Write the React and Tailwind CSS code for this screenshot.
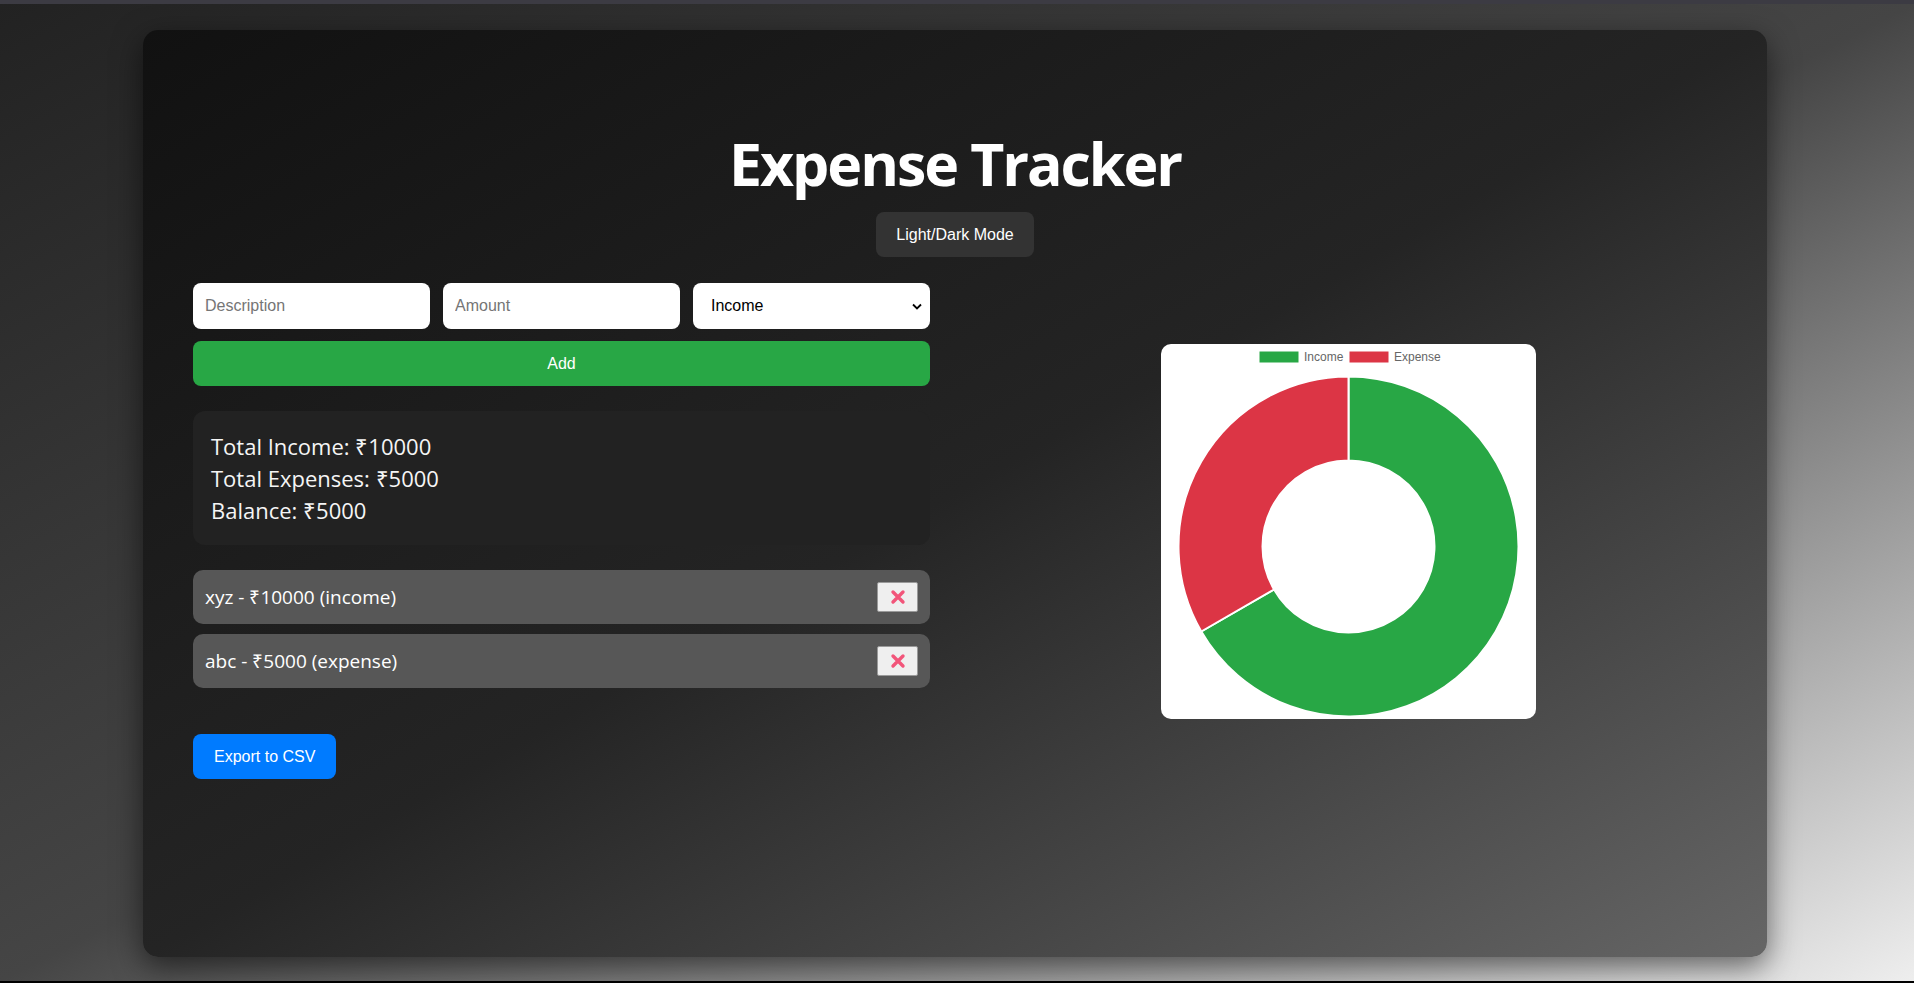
import React from "react";

const transactions = [
  { id: 1, text: "xyz", amount: 10000, type: "income" },
  { id: 2, text: "abc", amount: 5000, type: "expense" },
];

const CrossMark = () => (
  <svg width="16" height="16" viewBox="0 0 16 16">
    <path d="M3 3 L13 13 M13 3 L3 13" stroke="#f2557a" strokeWidth="3.4" strokeLinecap="round" />
  </svg>
);

const Chevron = () => (
  <svg width="10" height="7" viewBox="0 0 10 7">
    <path d="M1 1.5 L5 5.5 L9 1.5" fill="none" stroke="#000" strokeWidth="1.8" />
  </svg>
);

const Donut = () => {
  // center (187.5, 202.5), r 170 / 86, income 2/3 from 12 o'clock clockwise
  return (
    <svg width="375" height="375" viewBox="0 0 375 375">
      <rect x="98" y="7" width="40" height="12" fill="#28a745" stroke="#fff" strokeWidth="1" />
      <text x="143" y="17" fontSize="12" fill="#666" fontFamily="Liberation Sans, Arial, sans-serif">
        Income
      </text>
      <rect x="188" y="7" width="40" height="12" fill="#dc3545" stroke="#fff" strokeWidth="1" />
      <text x="233" y="17" fontSize="12" fill="#666" fontFamily="Liberation Sans, Arial, sans-serif">
        Expense
      </text>
      <path
        d="M187.5 32.5 A170 170 0 1 1 40.28 287.5 L113.02 245.5 A86 86 0 1 0 187.5 116.5 Z"
        fill="#28a745"
        stroke="#fff"
        strokeWidth="2"
      />
      <path
        d="M40.28 287.5 A170 170 0 0 1 187.5 32.5 L187.5 116.5 A86 86 0 0 0 113.02 245.5 Z"
        fill="#dc3545"
        stroke="#fff"
        strokeWidth="2"
      />
    </svg>
  );
};

export default function App() {
  return (
    <div className="w-full h-[983px] flex flex-col bg-black font-['Liberation_Sans',Arial,sans-serif]">
      <div className="h-[4px] bg-[#3c3b43]" />

      <div className="flex-1 pt-[26px] bg-[linear-gradient(to_bottom_right,#222_0%,#454545_50%,#eee_100%)]">
        {/* Card */}
        <div className="ml-[143px] w-[1624px] h-[927px] rounded-[15px] px-[50px] pt-[97px] flex flex-col bg-[linear-gradient(to_bottom_right,#111_0%,#242424_50%,#666_100%)] shadow-[0_10px_30px_rgba(0,0,0,0.55)]">
          <h1 className="text-center text-white font-bold text-[59px] leading-[72px] tracking-[-0.035em] font-['Open_Sans',sans-serif]">
            Expense Tracker
          </h1>
          <div className="flex justify-center mt-[13px]">
            <button className="h-[45px] px-5 rounded-[8px] bg-[#333] text-white text-[16px]">
              Light/Dark Mode
            </button>
          </div>

          <div className="mt-[26px] flex items-center gap-[50px]">
            {/* Left column */}
            <div className="w-[737px] flex flex-col">
              <div className="flex gap-[13px]">
                <input
                  placeholder="Description"
                  className="w-[237px] h-[46px] rounded-[8px] bg-white pl-3 text-[16px] placeholder:text-[#757575] outline-none"
                />
                <input
                  placeholder="Amount"
                  className="w-[237px] h-[46px] rounded-[8px] bg-white pl-3 text-[16px] placeholder:text-[#757575] outline-none"
                />
                <div className="w-[237px] h-[46px] rounded-[8px] bg-white pl-[18px] pr-[8px] flex items-center justify-between text-[16px] text-black">
                  <span>Income</span>
                  <Chevron />
                </div>
              </div>
              <button className="mt-[12px] h-[45px] rounded-[8px] bg-[#28a745] text-white text-[16px]">
                Add
              </button>

              <div className="mt-[25px] rounded-[12px] bg-[#222] px-[18px] py-[19px] text-[#f5f5f5] text-[22px] leading-[32px] font-['Open_Sans',sans-serif]">
                <div>Total Income: ₹10000</div>
                <div>Total Expenses: ₹5000</div>
                <div>Balance: ₹5000</div>
              </div>

              <ul className="mt-[25px] flex flex-col gap-[10px]">
                {transactions.map((t) => (
                  <li
                    key={t.id}
                    className="h-[54px] rounded-[10px] bg-[#575757] pl-3 pr-3 flex items-center justify-between text-white text-[19px] font-['Open_Sans',sans-serif]"
                  >
                    <span>
                      {t.text} - ₹{t.amount} ({t.type})
                    </span>
                    <button className="w-[41px] h-[30px] bg-[#efefef] border border-[#9a9a9a] rounded-[2px] flex items-center justify-center">
                      <CrossMark />
                    </button>
                  </li>
                ))}
              </ul>

              <div className="mt-[46px]">
                <button className="h-[45px] px-[21px] rounded-[8px] bg-[#007bff] text-white text-[16px]">
                  Export to CSV
                </button>
              </div>
            </div>

            {/* Right column */}
            <div className="w-[737px] flex justify-center">
              <div className="w-[375px] h-[375px] rounded-[10px] bg-white overflow-hidden">
                <Donut />
              </div>
            </div>
          </div>
        </div>
      </div>

      <div className="h-[2px] bg-black" />
    </div>
  );
}
